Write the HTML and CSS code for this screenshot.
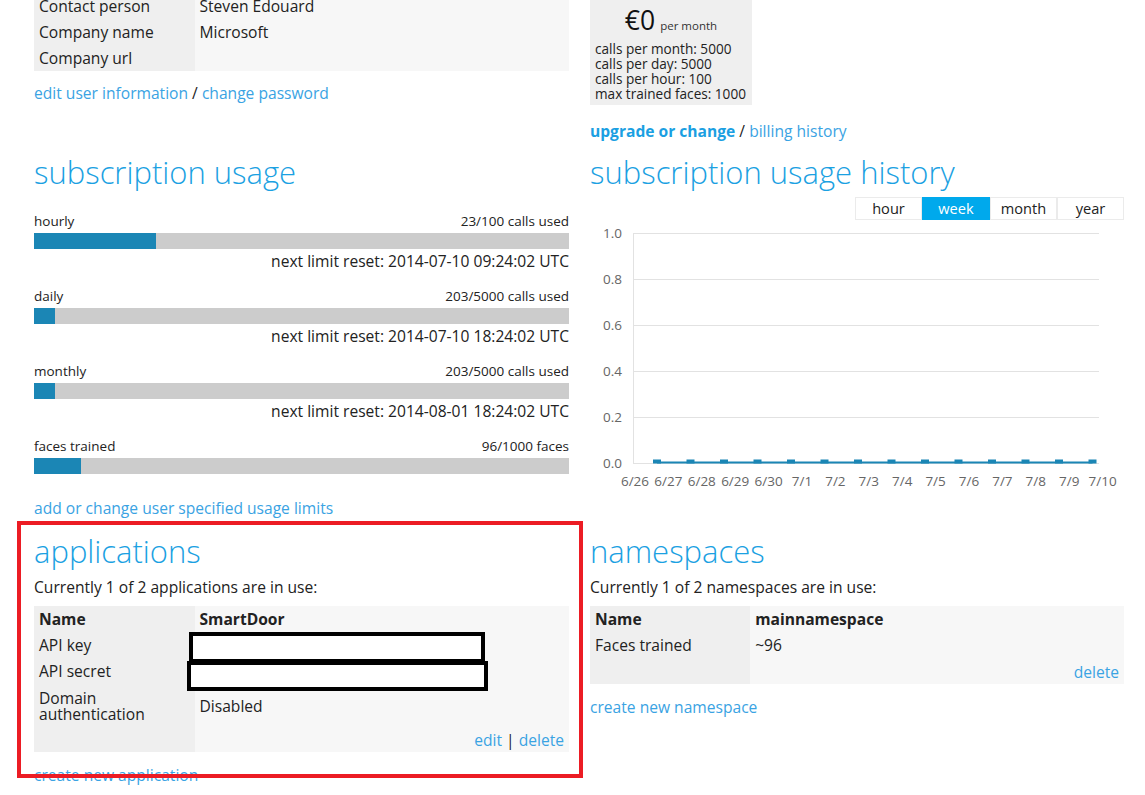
FILE: index.html
```html
<!DOCTYPE html>
<html lang="en">
<head>
<meta charset="utf-8">
<title>Account</title>
<link rel="stylesheet" href="styles.css">
</head>
<body>
<div class="page">
  <section class="cell">
    <table class="kv">
      <tr><th>Contact person</th><td>Steven Edouard</td></tr>
      <tr><th>Company name</th><td>Microsoft</td></tr>
      <tr><th>Company url</th><td></td></tr>
    </table>
    <p class="links"><a href="#">edit user information</a> / <a href="#">change password</a></p>
  </section>

  <section class="cell">
    <div class="plan">
      <div class="price"><span class="amount">€0</span><span class="per">per month</span></div>
      <div class="limits">calls per month: 5000<br>calls per day: 5000<br>calls per hour: 100<br>max trained faces: 1000</div>
    </div>
    <p class="links links-plan"><a href="#" class="strong">upgrade or change</a> / <a href="#">billing history</a></p>
  </section>

  <section class="cell">
    <h2>subscription usage</h2>
    <div class="usage">
      <div class="meter">
        <div class="meter-head"><span>hourly</span><span>23/100 calls used</span></div>
        <div class="track"><div class="fill" style="width:22.8%"></div></div>
        <div class="reset">next limit reset: 2014-07-10 09:24:02 UTC</div>
      </div>
      <div class="meter">
        <div class="meter-head"><span>daily</span><span>203/5000 calls used</span></div>
        <div class="track"><div class="fill" style="width:3.9%"></div></div>
        <div class="reset">next limit reset: 2014-07-10 18:24:02 UTC</div>
      </div>
      <div class="meter">
        <div class="meter-head"><span>monthly</span><span>203/5000 calls used</span></div>
        <div class="track"><div class="fill" style="width:3.9%"></div></div>
        <div class="reset">next limit reset: 2014-08-01 18:24:02 UTC</div>
      </div>
      <div class="meter">
        <div class="meter-head"><span>faces trained</span><span>96/1000 faces</span></div>
        <div class="track"><div class="fill" style="width:8.8%"></div></div>
      </div>
    </div>
    <p class="links links-usage"><a href="#">add or change user specified usage limits</a></p>
  </section>

  <section class="cell">
    <h2>subscription usage history</h2>
    <div class="tabs">
      <span class="tab">hour</span><span class="tab tab-wide active">week</span><span class="tab">month</span><span class="tab">year</span>
    </div>
    <svg class="chart" width="534" height="270" viewBox="0 0 534 270">
      <g class="grid">
        <line x1="43" y1="13.5" x2="509" y2="13.5"/>
        <line x1="43" y1="59.5" x2="509" y2="59.5"/>
        <line x1="43" y1="105.5" x2="509" y2="105.5"/>
        <line x1="43" y1="151.5" x2="509" y2="151.5"/>
        <line x1="43" y1="197.5" x2="509" y2="197.5"/>
        <line x1="43" y1="243.5" x2="509" y2="243.5"/>
        <line x1="43.5" y1="13" x2="43.5" y2="244"/>
      </g>
      <g class="ylab">
        <text x="32" y="18">1.0</text>
        <text x="32" y="64">0.8</text>
        <text x="32" y="110">0.6</text>
        <text x="32" y="156">0.4</text>
        <text x="32" y="202">0.2</text>
        <text x="32" y="248">0.0</text>
      </g>
      <g class="xlab">
        <text x="45" y="266">6/26</text>
        <text x="78.4" y="266">6/27</text>
        <text x="111.8" y="266">6/28</text>
        <text x="145.2" y="266">6/29</text>
        <text x="178.6" y="266">6/30</text>
        <text x="212" y="266">7/1</text>
        <text x="245.4" y="266">7/2</text>
        <text x="278.8" y="266">7/3</text>
        <text x="312.2" y="266">7/4</text>
        <text x="345.6" y="266">7/5</text>
        <text x="379" y="266">7/6</text>
        <text x="412.4" y="266">7/7</text>
        <text x="445.8" y="266">7/8</text>
        <text x="479.2" y="266">7/9</text>
        <text x="512.6" y="266">7/10</text>
      </g>
      <g class="series">
        <line x1="67" y1="242.5" x2="502.5" y2="242.5"/>
        <rect x="63" y="239.5" width="8" height="4"/>
        <rect x="96.5" y="239.5" width="8" height="4"/>
        <rect x="130" y="239.5" width="8" height="4"/>
        <rect x="163.5" y="239.5" width="8" height="4"/>
        <rect x="197" y="239.5" width="8" height="4"/>
        <rect x="230.5" y="239.5" width="8" height="4"/>
        <rect x="264" y="239.5" width="8" height="4"/>
        <rect x="297.5" y="239.5" width="8" height="4"/>
        <rect x="331" y="239.5" width="8" height="4"/>
        <rect x="364.5" y="239.5" width="8" height="4"/>
        <rect x="398" y="239.5" width="8" height="4"/>
        <rect x="431.5" y="239.5" width="8" height="4"/>
        <rect x="465" y="239.5" width="8" height="4"/>
        <rect x="498.5" y="239.5" width="8" height="4"/>
      </g>
    </svg>
  </section>

  <section class="cell apps">
    <h2 class="h-bottom">applications</h2>
    <p class="intro">Currently 1 of 2 applications are in use:</p>
    <div class="tablewrap">
      <table class="kv kv-list">
        <tr class="head"><th>Name</th><td>SmartDoor</td></tr>
        <tr><th>API key</th><td></td></tr>
        <tr><th>API secret</th><td></td></tr>
        <tr class="tall"><th>Domain<br>authentication</th><td>Disabled</td></tr>
        <tr class="actions"><th></th><td><a href="#">edit</a> | <a href="#">delete</a></td></tr>
      </table>
      <div class="redact redact-key"></div>
      <div class="redact redact-secret"></div>
    </div>
    <p class="links links-create"><a href="#">create new application</a></p>
    <div class="annotation"></div>
  </section>

  <section class="cell">
    <h2 class="h-bottom">namespaces</h2>
    <p class="intro">Currently 1 of 2 namespaces are in use:</p>
    <div class="tablewrap">
      <table class="kv kv-list">
        <tr class="head"><th>Name</th><td>mainnamespace</td></tr>
        <tr><th>Faces trained</th><td>~96</td></tr>
        <tr class="actions ns-actions"><th></th><td><a href="#">delete</a></td></tr>
      </table>
    </div>
    <p class="links links-create"><a href="#">create new namespace</a></p>
  </section>
</div>
</body>
</html>
```

FILE: styles.css
```css
* { box-sizing: border-box; }

html, body {
  margin: 0;
  background: #ffffff;
}

body {
  font-family: "Open Sans", "Liberation Sans", sans-serif;
  font-size: 15.6px;
  color: #222222;
  overflow: hidden;
}

a {
  color: #3aa3e3;
  text-decoration: none;
}

.page {
  display: grid;
  grid-template-columns: 535px 534px;
  column-gap: 21px;
  padding-left: 34px;
  margin-top: -7px;
  align-items: start;
}

.cell {
  min-width: 0;
}

h2 {
  margin: 13px 0 0;
  font-size: 31px;
  line-height: 36px;
  font-weight: 300;
  color: #1ba1e2;
  white-space: nowrap;
}

h2.h-bottom {
  margin-top: 15px;
}

/* key/value tables */
.kv {
  width: 100%;
  border-collapse: collapse;
  font-size: 15.6px;
}

.kv th,
.kv td {
  padding: 3px 5px;
  line-height: 20px;
  text-align: left;
  vertical-align: middle;
  font-weight: normal;
}

.kv th {
  width: 30%;
  background: #efefef;
}

.kv td {
  background: #f7f7f7;
}

.kv .head th,
.kv .head td {
  font-weight: bold;
}

.kv .tall th {
  line-height: 16px;
  padding-top: 6px;
  padding-bottom: 6px;
}

.kv .actions td {
  text-align: right;
  padding-top: 2px;
  padding-bottom: 2px;
}

.kv .ns-actions td {
  padding-top: 4px;
  padding-bottom: 2px;
}

.links {
  margin: 12px 0 0;
  font-size: 15.6px;
  line-height: 20px;
  white-space: nowrap;
}

.links .strong {
  font-weight: bold;
  color: #1b9fe2;
}

.links-plan {
  margin-top: 16px;
}

.links-usage {
  margin-top: 24px;
}

.links-create {
  margin-top: 13px;
}

/* plan box */
.plan {
  width: 162px;
  background: #efefef;
  padding: 10px 5px 4px;
}

.price {
  display: flex;
  justify-content: center;
  align-items: baseline;
  gap: 5px;
  height: 34px;
  line-height: 34px;
  white-space: nowrap;
}

.price .amount {
  font-size: 26.5px;
  color: #111111;
}

.price .per {
  font-size: 11.5px;
  color: #333333;
}

.limits {
  margin-top: 4px;
  font-size: 13.6px;
  line-height: 15px;
  color: #222222;
  white-space: nowrap;
}

/* usage meters */
.usage {
  margin-top: 23px;
}

.meter + .meter {
  margin-top: 17px;
}

.meter-head {
  display: flex;
  justify-content: space-between;
  font-size: 13.5px;
  line-height: 16px;
}

.track {
  margin-top: 4px;
  height: 16px;
  background: #cccccc;
}

.fill {
  height: 100%;
  background: #1b86b5;
}

.reset {
  margin-top: 2px;
  text-align: right;
  font-size: 15.6px;
  line-height: 20px;
}

/* history */
.tabs {
  display: flex;
  justify-content: flex-end;
  margin-top: 7px;
  height: 23px;
}

.tab {
  width: 67px;
  height: 23px;
  border: 1px solid #ebebeb;
  text-align: center;
  font-size: 14.6px;
  line-height: 21px;
  color: #222222;
}

.tab-wide {
  width: 68px;
}

.tab.active {
  background: #00a9ec;
  border-color: #00a9ec;
  color: #ffffff;
}

.chart {
  display: block;
}

.chart .grid line {
  stroke: #e2e2e2;
  stroke-width: 1;
}

.chart text {
  font-family: "Open Sans", "Liberation Sans", sans-serif;
  font-size: 13.5px;
  fill: #666666;
}

.chart .ylab text {
  text-anchor: end;
}

.chart .xlab text {
  text-anchor: middle;
}

.chart .series line {
  stroke: #1b86b5;
  stroke-width: 2;
}

.chart .series rect {
  fill: #1b86b5;
}

/* applications / namespaces */
.intro {
  margin: 8px 0 0;
  font-size: 15.6px;
  line-height: 20px;
}

.tablewrap {
  position: relative;
  margin-top: 9px;
}

.apps {
  position: relative;
}

.redact {
  position: absolute;
  border: 4px solid #000000;
  background: #ffffff;
}

.redact-key {
  left: 155px;
  top: 26px;
  width: 296px;
  height: 31px;
}

.redact-secret {
  left: 153px;
  top: 55px;
  width: 301px;
  height: 30px;
}

.annotation {
  position: absolute;
  left: -17px;
  top: 3px;
  width: 566px;
  height: 257px;
  border: 4px solid #ec1c24;
  pointer-events: none;
}
```
